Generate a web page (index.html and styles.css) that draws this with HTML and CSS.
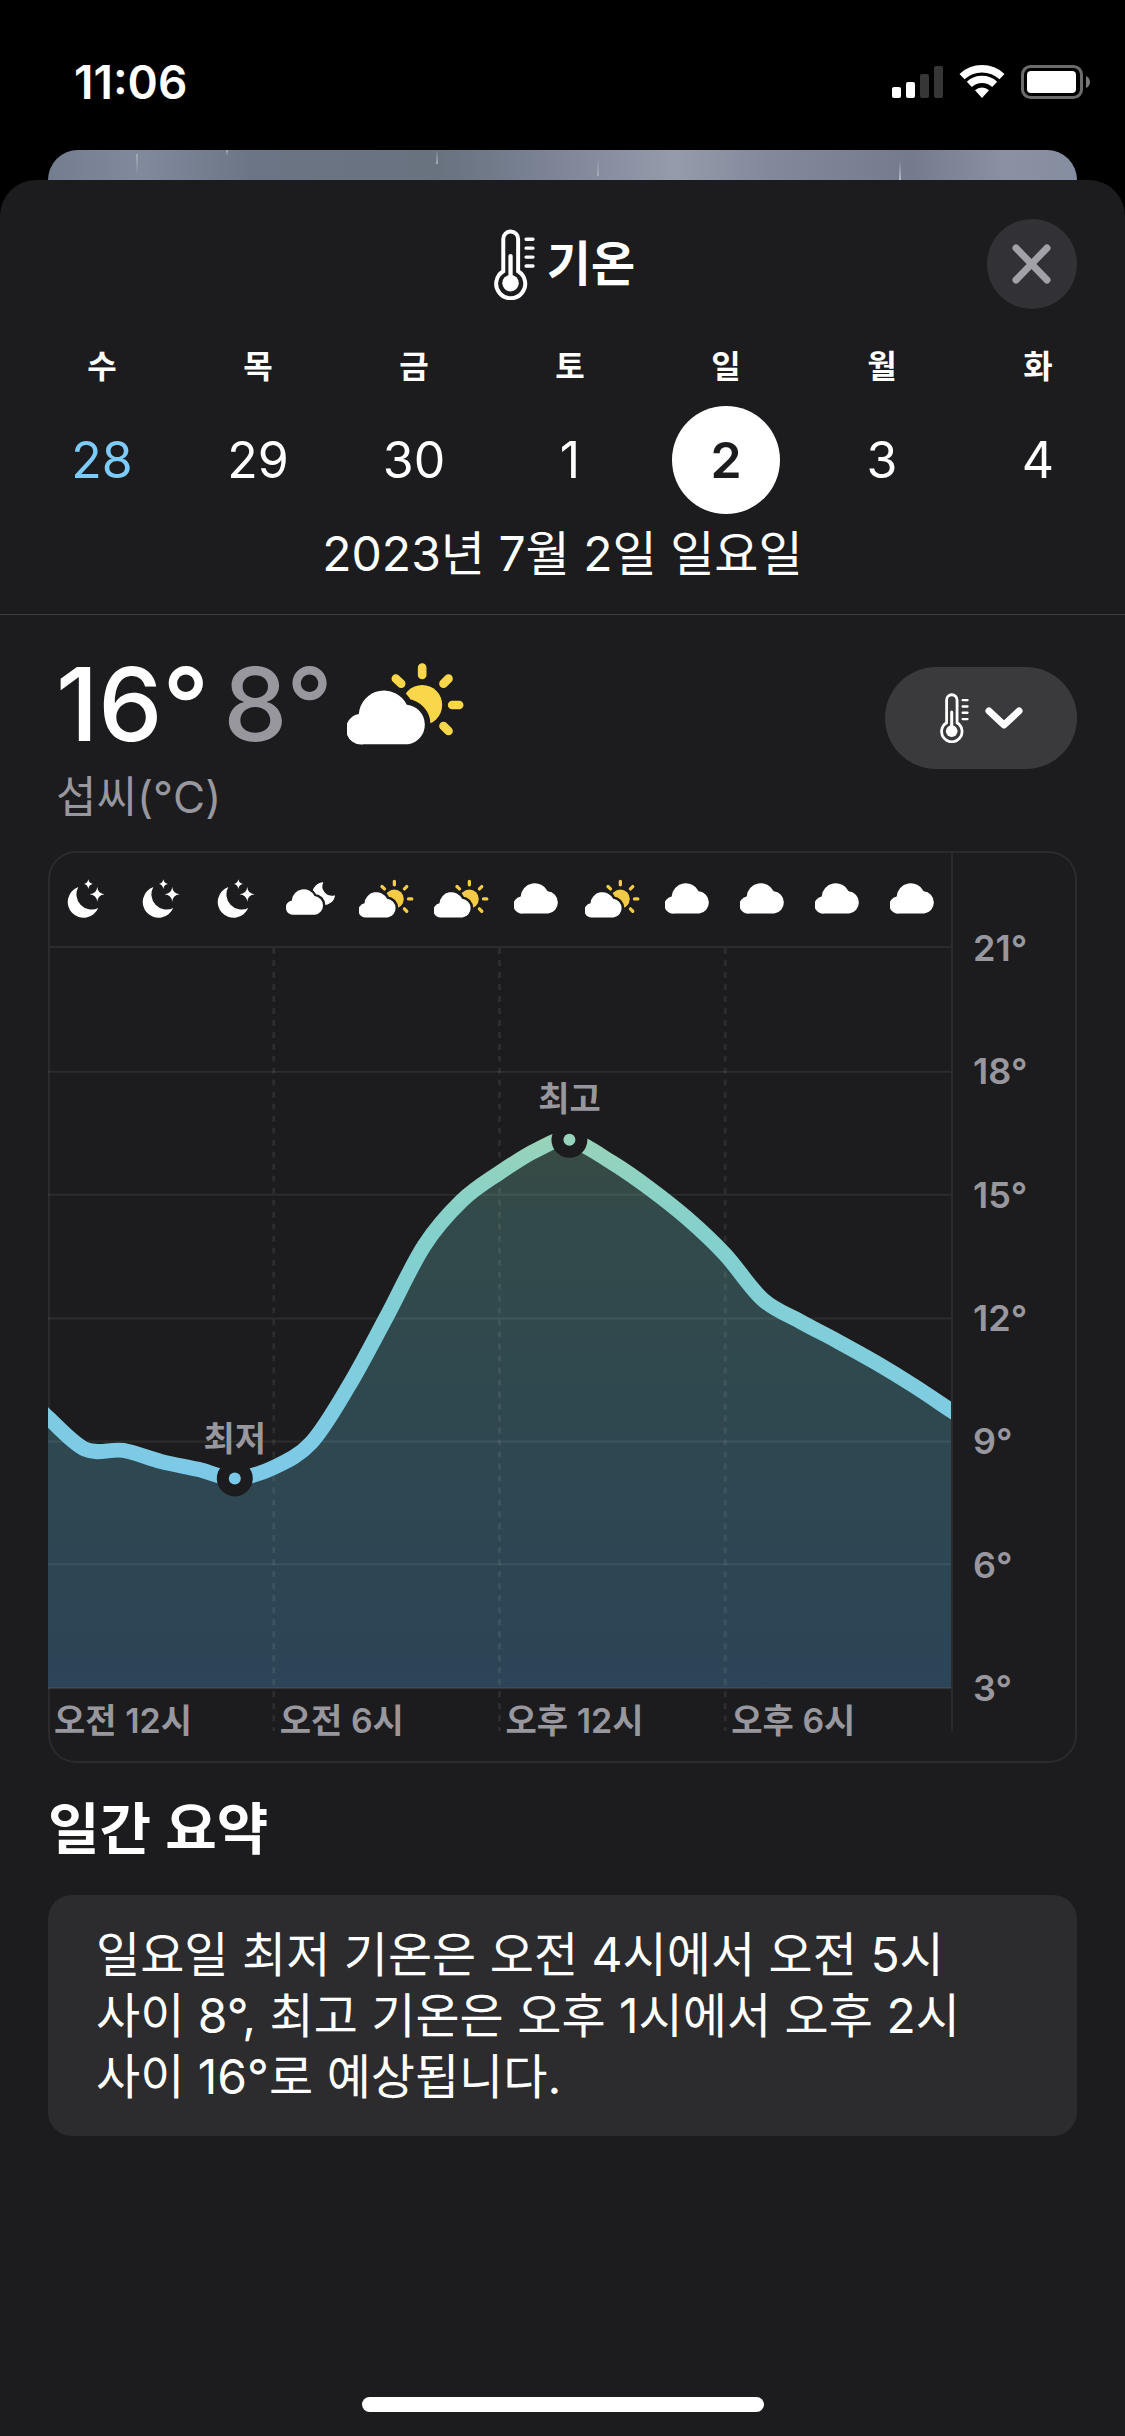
FILE: index.html
```html
<!DOCTYPE html>
<html lang="ko">
<head>
<meta charset="utf-8">
<meta name="viewport" content="width=device-width">
<title>기온</title>
<link rel="stylesheet" href="styles.css">
</head>
<body>
<svg class="defs" aria-hidden="true">
  <defs>
    <path id="cloud-shape" d="M978 285A46 46 0 0 1 963 194A76 76 0 0 1 1107 166A60 60 0 0 1 1110 285Z"/>
    <mask id="sun-cut" maskUnits="userSpaceOnUse" x="900" y="0" width="400" height="320">
      <rect x="900" y="0" width="400" height="320" fill="#fff"/>
      <use href="#cloud-shape" fill="#000" stroke="#000" stroke-width="34"/>
    </mask>
    <mask id="moon-cut" maskUnits="userSpaceOnUse" x="700" y="100" width="180" height="140">
      <rect x="700" y="100" width="180" height="140" fill="#fff"/>
      <use href="#cloud-shape" transform="translate(283 89) scale(.467)" fill="#000" stroke="#000" stroke-width="30"/>
    </mask>
    <symbol id="thermometer" viewBox="44 56 124 215">
      <g fill="none" stroke="#fff" stroke-linecap="round">
        <path stroke-width="12" d="M72 184V86A22 22 0 0 1 117 86V184A44 44 0 1 1 72 184Z"/>
        <path stroke-width="13" d="M94 138V220"/>
        <path stroke-width="10" d="M141 87H162M141 114H162M141 141H162M141 168H162"/>
      </g>
      <circle cx="94" cy="220" r="25" fill="#fff"/>
    </symbol>
    <symbol id="cloud" viewBox="928 122 244 165"><use href="#cloud-shape" fill="#fff"/></symbol>
    <symbol id="cloud-sun" viewBox="928 41 350 246">
      <use href="#cloud-shape" fill="#fff"/>
      <circle cx="1153" cy="167" r="60" fill="currentColor" mask="url(#sun-cut)"/>
      <path fill="none" stroke="currentColor" stroke-linecap="round" d="M1153 55V77M1232 88L1217 103M1243 167H1264M1217 230L1232 245M1074 88L1090 103"/>
    </symbol>
    <symbol id="cloud-moon" viewBox="716 125 147 98">
      <use href="#cloud-shape" transform="translate(283 89) scale(.467)" fill="#fff"/>
      <path fill="#fff" mask="url(#moon-cut)" d="M826 126A34 34 0 1 0 861 164A28 28 0 0 1 826 126Z"/>
    </symbol>
    <symbol id="moon" viewBox="80 114 114 121">
      <path fill="#fff" d="M114 138A48 48 0 1 0 174 202A46 46 0 0 1 114 138Z"/>
      <path fill="#fff" d="M171 138Q173 158 193 160Q173 162 171 183Q169 162 148 160Q169 158 171 138Z"/>
      <path fill="#fff" d="M144 115Q146 127 158 129Q146 131 144 144Q142 131 131 129Q142 127 144 115Z"/>
    </symbol>
  </defs>
</svg>

<header class="status">
  <time>11:06</time>
  <div class="status-icons">
    <svg width="51" height="34" viewBox="0 0 51 34" aria-label="셀룰러 신호">
      <rect x="0" y="22" width="9" height="11" rx="2" fill="#fff"/>
      <rect x="14" y="17" width="9" height="16" rx="2" fill="#fff"/>
      <rect x="28" y="9" width="9" height="24" rx="2" fill="#363636"/>
      <rect x="42" y="1" width="9" height="32" rx="2" fill="#363636"/>
    </svg>
    <svg width="46" height="34" viewBox="300 75 138 102" aria-label="Wi-Fi">
      <path fill="none" stroke="#fff" stroke-width="22" d="M309 110A88 88 0 0 1 429 110M331 133A56 56 0 0 1 407 133"/>
      <path fill="#fff" d="M369 174L348 151A31 31 0 0 1 390 151Z"/>
    </svg>
    <svg width="70" height="34" viewBox="0 0 70 34" aria-label="배터리">
      <rect x="1.5" y="1.5" width="59" height="31" rx="8" fill="none" stroke="#6c6c6c" stroke-width="3"/>
      <rect x="6" y="6" width="49" height="22" rx="4" fill="#fff"/>
      <path d="M65 11Q69 13 69 17T65 23Z" fill="#7a7a7a"/>
    </svg>
  </div>
</header>
<div class="backdrop"></div>

<main class="sheet">
  <div class="title-bar">
    <h1 class="title"><svg width="41" height="71"><use href="#thermometer"/></svg>기온</h1>
    <button class="close" type="button" aria-label="닫기">
      <svg width="90" height="90" viewBox="0 0 90 90"><path d="M29 29L60 61M60 29L29 61" fill="none" stroke="#a1a1a7" stroke-width="7" stroke-linecap="round"/></svg>
    </button>
  </div>

  <nav class="week" aria-label="날짜 선택">
    <button type="button" class="day today"><span class="weekday">수</span><span class="date">28</span></button>
    <button type="button" class="day"><span class="weekday">목</span><span class="date">29</span></button>
    <button type="button" class="day"><span class="weekday">금</span><span class="date">30</span></button>
    <button type="button" class="day"><span class="weekday">토</span><span class="date">1</span></button>
    <button type="button" class="day selected" aria-current="date"><span class="weekday">일</span><span class="date">2</span></button>
    <button type="button" class="day"><span class="weekday">월</span><span class="date">3</span></button>
    <button type="button" class="day"><span class="weekday">화</span><span class="date">4</span></button>
  </nav>
  <p class="full-date">2023년 7월 2일 일요일</p>

  <section class="overview">
    <div>
      <p class="temps"><span>16°</span><span class="low">8°</span><svg class="big-sun" width="117" height="82"><use href="#cloud-sun"/></svg></p>
      <p class="unit">섭씨(°C)</p>
    </div>
    <button class="metric" type="button" aria-label="기온">
      <svg width="29" height="50"><use href="#thermometer"/></svg>
      <svg width="38" height="24" viewBox="0 0 38 24"><path d="M4 5L19 19L34 5" fill="none" stroke="#fff" stroke-width="7" stroke-linecap="round" stroke-linejoin="round"/></svg>
    </button>
  </section>

  <section class="chart" aria-label="시간별 기온">
    <div class="conditions">
      <svg width="38" height="40"><use href="#moon"/></svg>
      <svg width="38" height="40"><use href="#moon"/></svg>
      <svg width="38" height="40"><use href="#moon"/></svg>
      <svg width="50" height="33"><use href="#cloud-moon"/></svg>
      <svg width="55" height="39"><use href="#cloud-sun"/></svg>
      <svg width="55" height="39"><use href="#cloud-sun"/></svg>
      <svg width="46" height="31"><use href="#cloud"/></svg>
      <svg width="55" height="39"><use href="#cloud-sun"/></svg>
      <svg width="46" height="31"><use href="#cloud"/></svg>
      <svg width="46" height="31"><use href="#cloud"/></svg>
      <svg width="46" height="31"><use href="#cloud"/></svg>
      <svg width="46" height="31"><use href="#cloud"/></svg>
    </div>
    <div class="axis-top"></div>
    <svg class="plot" viewBox="0 0 904 784">
      <defs>
        <linearGradient id="line-color" gradientUnits="userSpaceOnUse" x1="0" y1="185" x2="0" y2="540">
          <stop offset="0" stop-color="#9ad3b8"/>
          <stop offset=".12" stop-color="#8fd2c2"/>
          <stop offset=".3" stop-color="#83d0cd"/>
          <stop offset=".6" stop-color="#80cedb"/>
          <stop offset="1" stop-color="#7bc9e8"/>
        </linearGradient>
        <linearGradient id="area-color" gradientUnits="userSpaceOnUse" x1="0" y1="190" x2="0" y2="741">
          <stop offset="0" stop-color="#394b43"/>
          <stop offset=".13" stop-color="#324a49"/>
          <stop offset=".4" stop-color="#30494e"/>
          <stop offset=".6" stop-color="#2e4751"/>
          <stop offset="1" stop-color="#2c4557"/>
        </linearGradient>
      </defs>
      <path id="area" fill="url(#area-color)"/>
      <path class="grid-line" d="M0 124H904M0 247H904M0 371H904M0 494H904M0 617H904M0 741H904"/>
      <path class="grid-line dashed" d="M226 0V784M452 0V784M678 0V784"/>
      <path id="line" fill="none" stroke="url(#line-color)" stroke-width="15" stroke-linejoin="round"/>
      <circle cx="187" cy="531" r="18" fill="#1c1c1e"/>
      <circle cx="187" cy="531" r="6" fill="#7bc9e8"/>
      <circle cx="522" cy="192" r="18" fill="#1c1c1e"/>
      <circle cx="522" cy="192" r="6" fill="#98d3bb"/>
      <text class="mark" x="187" y="504">최저</text>
      <text class="mark" x="522" y="163">최고</text>
    </svg>
    <ol class="hours">
      <li>오전 12시</li><li>오전 6시</li><li>오후 12시</li><li>오후 6시</li>
    </ol>
    <ol class="axis">
      <li>21°</li><li>18°</li><li>15°</li><li>12°</li><li>9°</li><li>6°</li><li>3°</li>
    </ol>
  </section>

  <h2 class="summary-title">일간 요약</h2>
  <p class="summary">일요일 최저 기온은 오전 4시에서 오전 5시 사이 8°, 최고 기온은 오후 1시에서 오후 2시 사이 16°로 예상됩니다.</p>
  <div class="home-indicator"></div>
</main>
<script src="chart.js"></script>
</body>
</html>
```
FILE: styles.css
```css
* { box-sizing: border-box; }
body, h1, h2, p, ol { margin: 0; padding: 0; }
ol { list-style: none; }
button { border: 0; padding: 0; background: none; color: inherit; font: inherit; cursor: pointer; }
svg { display: block; flex: none; }

body {
  display: flex;
  flex-direction: column;
  min-height: 100vh;
  background: #000;
  color: #fff;
  font-family: Inter, "Noto Sans CJK KR", sans-serif;
  font-size: 48px;
  line-height: 60px;
}
.defs { position: absolute; width: 0; height: 0; }

.status {
  display: flex;
  justify-content: space-between;
  align-items: center;
  height: 150px;
  padding: 14px 34px 0 74px;
  font-size: 46px;
  font-weight: 600;
}
.status-icons { display: flex; gap: 16px; }

.backdrop {
  height: 66px;
  margin: 0 48px -36px;
  border-radius: 30px 30px 0 0;
  background:
    linear-gradient(#a5abb8, #a5abb800) 88px 4px / 2px 20px no-repeat,
    linear-gradient(#a5abb8, #8a92a200) 178px 0 / 2px 6px no-repeat,
    linear-gradient(#8a92a200, #a5abb8) 388px 0 / 2px 14px no-repeat,
    linear-gradient(#a5abb800, #a5abb8) 549px 8px / 2px 18px no-repeat,
    linear-gradient(#a5abb800, #b5bac6) 851px 10px / 2px 20px no-repeat,
    linear-gradient(90deg, #747d90, #818a9d 9%, #6c7585 20%, #69727f 38%, #7a8294 48%, #969bab 61%, #81899a 70%, #737b8c 84%, #8a91a2 93%, #858da0);
}

.sheet {
  flex: 1;
  display: flex;
  flex-direction: column;
  padding-bottom: 24px;
  border-radius: 36px 36px 0 0;
  background: #1c1c1e;
}

.title-bar {
  display: grid;
  grid-template-columns: 90px 1fr 90px;
  align-items: center;
  padding: 39px 48px 0;
}
.title {
  grid-column: 2;
  display: flex;
  justify-content: center;
  align-items: center;
  gap: 12px;
  padding-left: 4px;
  font-size: 48px;
  font-weight: 600;
}
.close { width: 90px; height: 90px; border-radius: 50%; background: #323236; }

.week {
  display: grid;
  grid-template-columns: repeat(7, 1fr);
  padding: 34px 9px 0 24px;
}
.day { display: flex; flex-direction: column; align-items: center; gap: 15px; }
.weekday { font-size: 32px; line-height: 48px; font-weight: 600; }
.date { width: 108px; border-radius: 50%; font-size: 50px; line-height: 108px; }
.today .date { color: #7dcbfb; }
.selected .date { background: #fff; color: #1c1c1e; font-weight: 600; }

.full-date {
  padding: 10px 0 30px;
  border-bottom: 1px solid #3f3f42;
  text-align: center;
}

.overview {
  display: flex;
  justify-content: space-between;
  padding: 44px 48px 24px 56px;
}
.temps {
  display: flex;
  align-items: center;
  gap: 14px;
  font-size: 102px;
  font-weight: 500;
  line-height: 90px;
}
.low, .unit { color: #98979e; }
.unit { margin-top: 18px; font-size: 44px; }
.big-sun { color: #f9d749; stroke-width: 26px; }
.metric {
  display: flex;
  justify-content: center;
  align-items: center;
  gap: 16px;
  width: 192px;
  height: 102px;
  margin-top: 8px;
  border-radius: 51px;
  background: #3a3a3d;
}

.chart {
  display: grid;
  grid-template-columns: 1fr 126px;
  grid-template-rows: 97px auto;
  margin: 0 48px;
  padding-bottom: 32px;
  border-radius: 28px;
  box-shadow: inset 0 0 0 2px #2b2b2d;
  color: #98979e;
  font-size: 36px;
  font-weight: 600;
  line-height: 44px;
}
.conditions {
  display: grid;
  grid-template-columns: repeat(12, 1fr);
  place-items: center;
  border-bottom: 2px solid #2b2b2d;
  color: #f3cb45;
  stroke-width: 21px;
}
.axis-top, .axis { border-left: 2px solid #2b2b2d; }
.plot { grid-area: 2 / 1; width: 100%; height: auto; }
.grid-line { fill: none; stroke: #fff; stroke-opacity: .07; stroke-width: 2; }
.dashed { stroke-dasharray: 6 6; stroke-width: 3; }
.mark { fill: #98979e; text-anchor: middle; font-size: 34px; font-weight: 600; }
.hours {
  grid-area: 2 / 1;
  align-self: end;
  display: grid;
  grid-template-columns: repeat(4, 1fr);
  font-size: 34px;
}
.hours li { margin-bottom: -12px; padding-left: 6px; white-space: nowrap; }
.axis {
  display: flex;
  flex-direction: column;
  justify-content: space-between;
  padding: 0 0 21px 20px;
}
.axis li:first-child { margin-top: -22px; }

.summary-title { margin: 30px 48px 0; font-size: 56px; font-weight: 600; line-height: 72px; }
.summary {
  margin: 30px 48px;
  padding: 29px 48px;
  border-radius: 24px;
  background: #2c2c2e;
  line-height: 61px;
  word-break: keep-all;
}
.home-indicator {
  width: 402px;
  height: 15px;
  margin: auto auto 0;
  border-radius: 8px;
  background: #fff;
}
```
FILE: chart.js
```javascript
// Hourly temperatures as chart heights; one hour is 904 / 24 units wide.
const heights = [470, 502, 503, 514, 522, 531, 520, 495, 438, 369, 298, 253, 225, 202, 192, 215, 241, 271, 307, 352, 374, 394, 415, 438, 463];
const points = heights.map((y, hour) => [hour * 904 / 24, y]);
points[5][0] = 187;
points[14][0] = 522;
points.unshift([-30, 440]);
points.push([934, 483]);

let line = `M${points[0]}`;
for (let i = 0; i < points.length - 1; i++) {
  const p0 = points[i - 1] || points[i];
  const p1 = points[i];
  const p2 = points[i + 1];
  const p3 = points[i + 2] || p2;
  const c1 = [p1[0] + (p2[0] - p0[0]) / 6, p1[1] + (p2[1] - p0[1]) / 6];
  const c2 = [p2[0] - (p3[0] - p1[0]) / 6, p2[1] - (p3[1] - p1[1]) / 6];
  line += `C${c1} ${c2} ${p2}`;
}
document.getElementById("line").setAttribute("d", line);
document.getElementById("area").setAttribute("d", `${line}V741H-30Z`);
```
